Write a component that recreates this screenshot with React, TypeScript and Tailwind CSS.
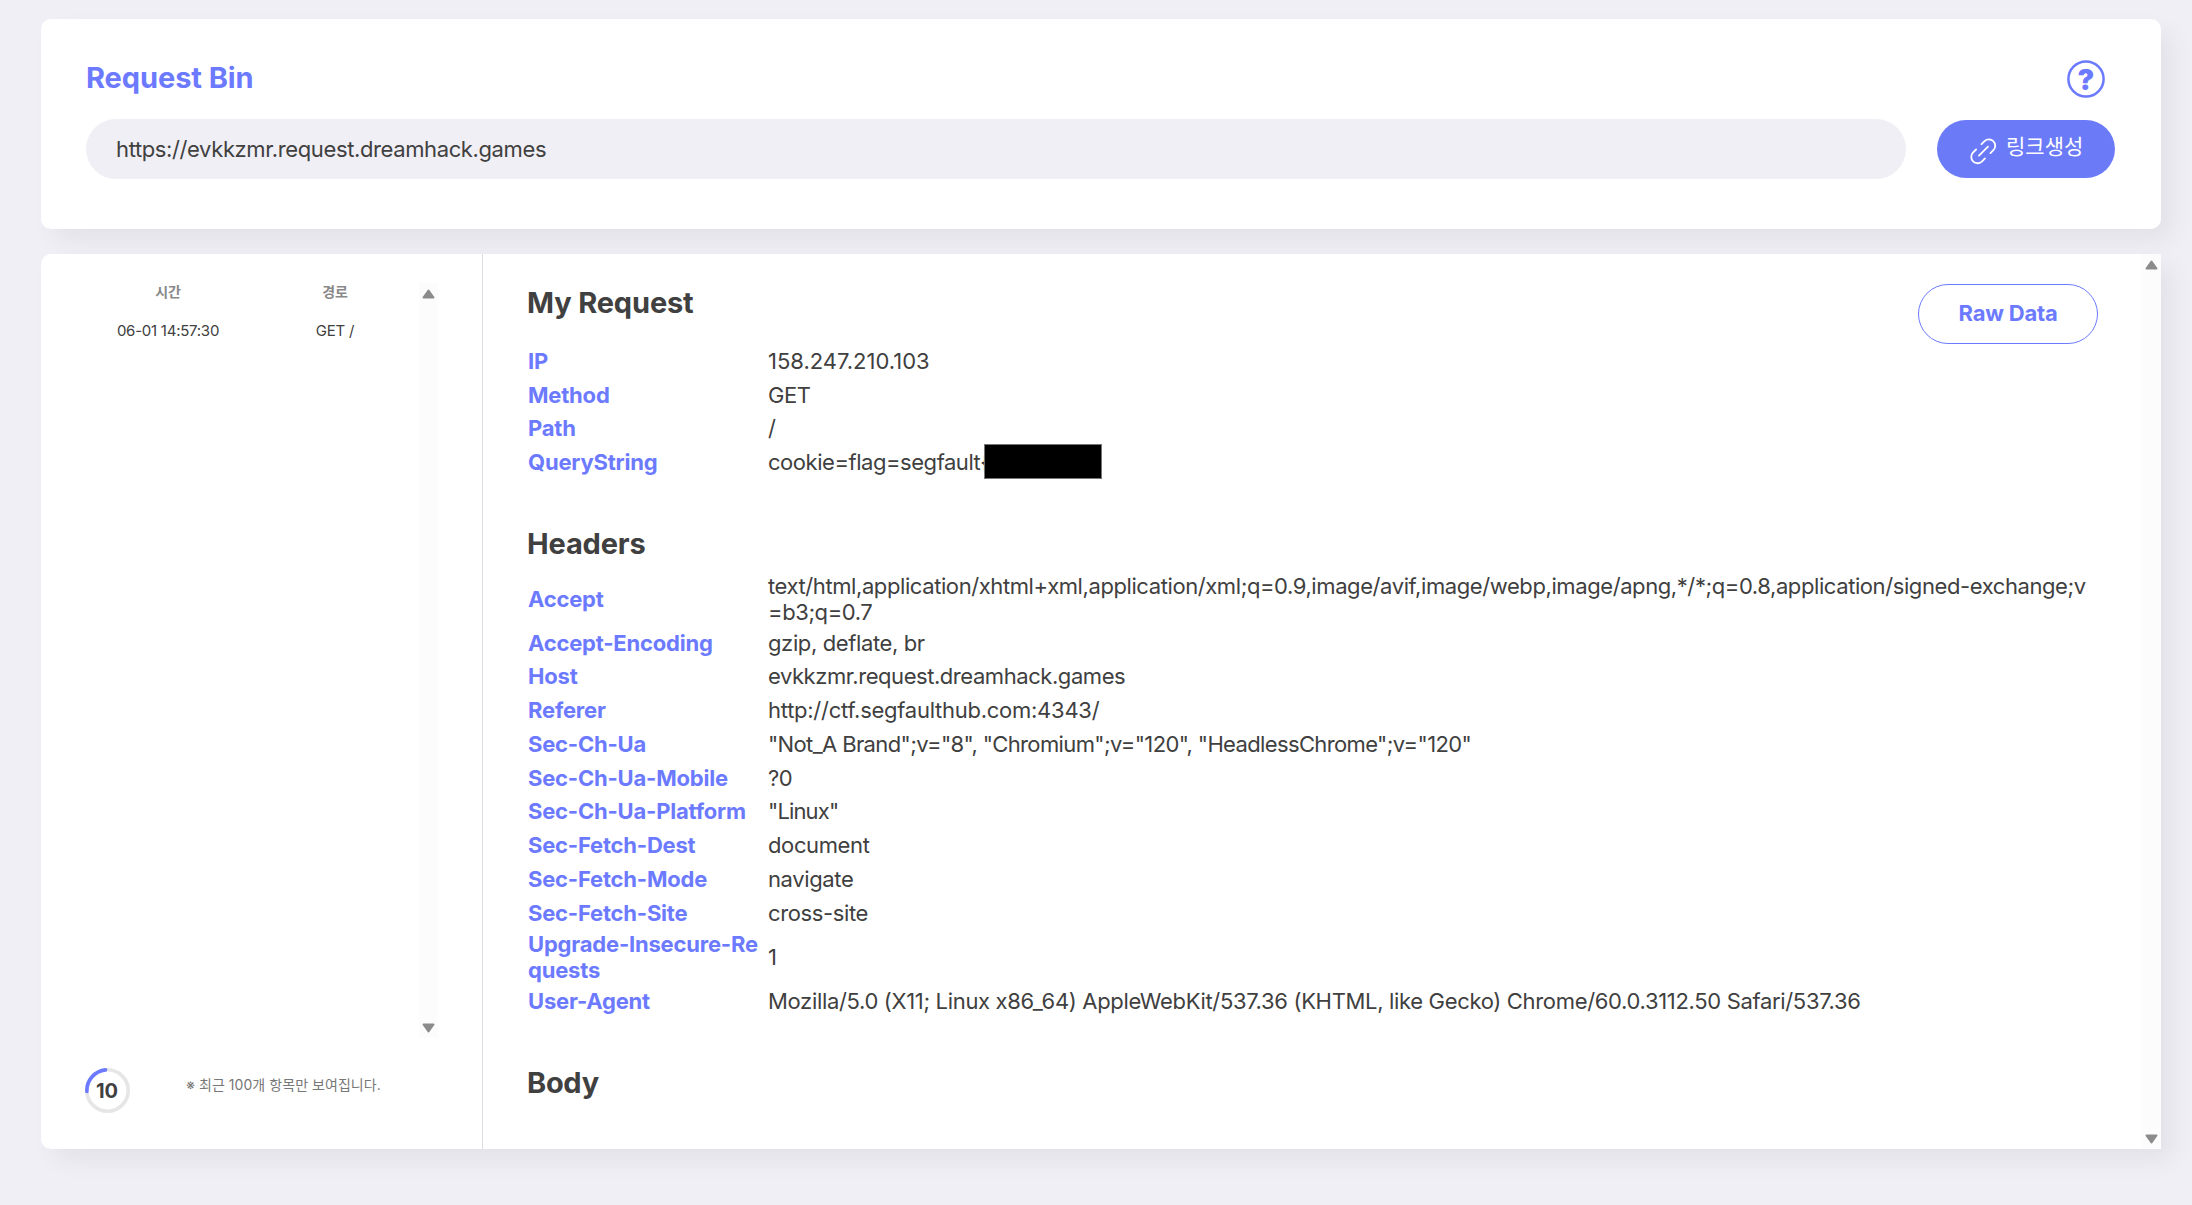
const request = [
  ["IP", "158.247.210.103", "tracking-[0px]"],
  ["Method", "GET", "tracking-[-0.5px]"],
  ["Path", "/"],
  ["QueryString", "cookie=flag=segfault{", "tracking-[-0.46px]"],
];

const headers = [
  [
    "Accept",
    "text/html,application/xhtml+xml,application/xml;q=0.9,image/avif,image/webp,image/apng,*/*;q=0.8,application/signed-exchange;v\n=b3;q=0.7",
    "tracking-[-0.41px]",
  ],
  ["Accept-Encoding", "gzip, deflate, br"],
  ["Host", "evkkzmr.request.dreamhack.games", "tracking-[-0.44px]"],
  ["Referer", "http://ctf.segfaulthub.com:4343/", "tracking-[-0.26px]"],
  ["Sec-Ch-Ua", '"Not_A Brand";v="8", "Chromium";v="120", "HeadlessChrome";v="120"', "tracking-[-0.63px]"],
  ["Sec-Ch-Ua-Mobile", "?0"],
  ["Sec-Ch-Ua-Platform", '"Linux"', "tracking-[-0.85px]"],
  ["Sec-Fetch-Dest", "document"],
  ["Sec-Fetch-Mode", "navigate"],
  ["Sec-Fetch-Site", "cross-site"],
  ["Upgrade-Insecure-Re\nquests", "1"],
  [
    "User-Agent",
    "Mozilla/5.0 (X11; Linux x86_64) AppleWebKit/537.36 (KHTML, like Gecko) Chrome/60.0.3112.50 Safari/537.36",
    "tracking-[-0.33px]",
  ],
];

function Row({ name, value, tracking = "tracking-[-0.38px]" }: { name: string; value: string; tracking?: string }) {
  const tall = name.includes("\n") || value.includes("\n");
  return (
    <div
      className={`flex items-center whitespace-pre text-[22px] leading-[26.25px] ${tall ? "h-[54.25px]" : "h-[33.75px]"}`}
    >
      <div className="w-[240px] shrink-0 font-bold tracking-[-0.2px] text-[#6c7aff]">{name}</div>
      <div className={`relative ${tracking}`}>
        {value}
        {name === "QueryString" && (
          <span className="absolute top-[-5px] left-[216px] h-[35px] w-[118px] border border-[#777] bg-black" />
        )}
      </div>
    </div>
  );
}

function Arrow({ down }: { down?: boolean }) {
  return (
    <svg viewBox="0 0 13 10" className={`h-[10px] w-[13px] ${down ? "rotate-180" : ""}`}>
      <path d="M6.5 1.5 11.5 8.5H1.5Z" fill="#8b8b8b" stroke="#8b8b8b" strokeWidth="2" strokeLinejoin="round" />
    </svg>
  );
}

function Scrollbar() {
  return (
    <div className="flex h-full w-[19px] shrink-0 flex-col items-center justify-between bg-[#fcfcfc] pt-[6px] pb-[5px]">
      <Arrow />
      <Arrow down />
    </div>
  );
}

function LinkIcon() {
  return (
    <svg viewBox="0 0 28 28" className="mt-[4px] h-[28px] w-[28px]" fill="none" stroke="white" strokeWidth="1.8" strokeLinecap="round">
      <path d="M12.5 7.2 15.6 4.1A6.3 6.3 0 0 1 24.6 12.9L21.4 16.1" />
      <path d="M7.1 12.5 3.9 15.7A6.3 6.3 0 0 0 12.8 24.6L16 21.4" />
      <path d="M10 18.6 19 9.6" />
    </svg>
  );
}

export default function App() {
  return (
    <div className="flex h-[1205px] w-[2192px] flex-col gap-[25px] overflow-hidden bg-[#f0eff5] pt-[19px] pl-[41px] font-['Inter','Noto_Sans_CJK_KR',sans-serif] text-[#404040]">
      <section className="h-[210px] w-[2120px] shrink-0 rounded-[10px] bg-white pt-[41px] pr-[46px] pl-[45px] shadow-[12px_12px_25px_rgba(0,0,0,0.055)]">
        <div className="flex h-[38px] items-center justify-between pr-[10px]">
          <h1 className="pb-[2px] text-[29px] leading-[36px] font-bold tracking-[-0.08px] text-[#6c7aff]">Request Bin</h1>
          <div className="relative flex h-[38px] w-[38px] items-center justify-center pt-px text-[28px] leading-none font-black text-[#6c7aff]">
            <svg viewBox="0 0 38 38" className="absolute inset-0 h-[38px] w-[38px]" fill="none" stroke="#6c7aff" strokeWidth="2.5">
              <circle cx="19" cy="19" r="17.6" />
            </svg>
            ?
          </div>
        </div>
        <div className="mt-[21px] flex items-center gap-[31px]">
          <div className="flex h-[60px] w-[1820px] items-center rounded-full bg-[#f0eff5] pl-[30px] text-[22px] tracking-[-0.38px]">
            https://evkkzmr.request.dreamhack.games
          </div>
          <button className="flex h-[58px] w-[178px] items-center rounded-full bg-[#6b7bf8] pl-[32px] text-[21px] text-white">
            <LinkIcon />
            <span className="ml-[9px] pb-[4px] whitespace-nowrap">링크생성</span>
          </button>
        </div>
      </section>

      <section className="flex h-[895px] w-[2120px] shrink-0 rounded-l-[10px] bg-white shadow-[12px_12px_25px_rgba(0,0,0,0.055)]">
        <aside className="w-[442px] shrink-0 border-r border-[#dcdbe4] pt-[29px] pl-[44px]">
          <div className="flex h-[755px]">
            <div className="flex w-[334px] text-center text-[15px] leading-[18px] tracking-[-0.25px]">
              <div className="w-[166px]">
                <div className="text-[14px] font-semibold text-[#888]">시간</div>
                <div className="mt-[21px]">06-01 14:57:30</div>
              </div>
              <div className="w-[168px]">
                <div className="text-[14px] font-semibold text-[#888]">경로</div>
                <div className="mt-[21px]">GET /</div>
              </div>
            </div>
            <Scrollbar />
          </div>
          <div className="mt-[30px] flex">
            <div className="relative flex h-[45px] w-[45px] items-center justify-center pr-px text-[20px] font-bold">
              <svg viewBox="0 0 45 45" className="absolute inset-0 h-[45px] w-[45px]" fill="none" strokeWidth="3.6">
                <circle cx="22.5" cy="22.5" r="20.7" stroke="#e6e6e6" />
                <path d="M1.9 23.5A20.7 20.7 0 0 1 20.5 1.9" stroke="#6c7aff" strokeLinecap="round" />
              </svg>
              10
            </div>
            <p className="mt-[8px] ml-[56px] text-[14px] leading-[18px] tracking-[0.05px] whitespace-nowrap text-[#777]">
              ※ 최근 100개 항목만 보여집니다.
            </p>
          </div>
        </aside>
        <div className="flex min-w-0 grow">
          <div className="w-0 grow pt-[31px] pl-[44px]">
            <h2 className="text-[29px] leading-[36px] font-bold tracking-[-0.15px]">My Request</h2>
            <div className="mt-[23px] pl-px">
              {request.map(([name, value, tracking]) => (
                <Row key={name} name={name} value={value} tracking={tracking} />
              ))}
            </div>
            <h2 className="mt-[47px] text-[29px] leading-[36px] font-bold tracking-[-0.15px]">Headers</h2>
            <div className="mt-[9.7px] pl-px">
              {headers.map(([name, value, tracking]) => (
                <Row key={name} name={name} value={value} tracking={tracking} />
              ))}
            </div>
            <h2 className="mt-[47.3px] text-[29px] leading-[36px] font-bold tracking-[-0.3px]">Body</h2>
          </div>
          <button className="mt-[30px] mr-[44px] -ml-[180px] h-[60px] w-[180px] shrink-0 rounded-full border border-[#6c7aff] pb-[2px] text-[22px] font-bold tracking-[-0.2px] text-[#6c7aff]">
            Raw Data
          </button>
          <Scrollbar />
        </div>
      </section>
    </div>
  );
}
